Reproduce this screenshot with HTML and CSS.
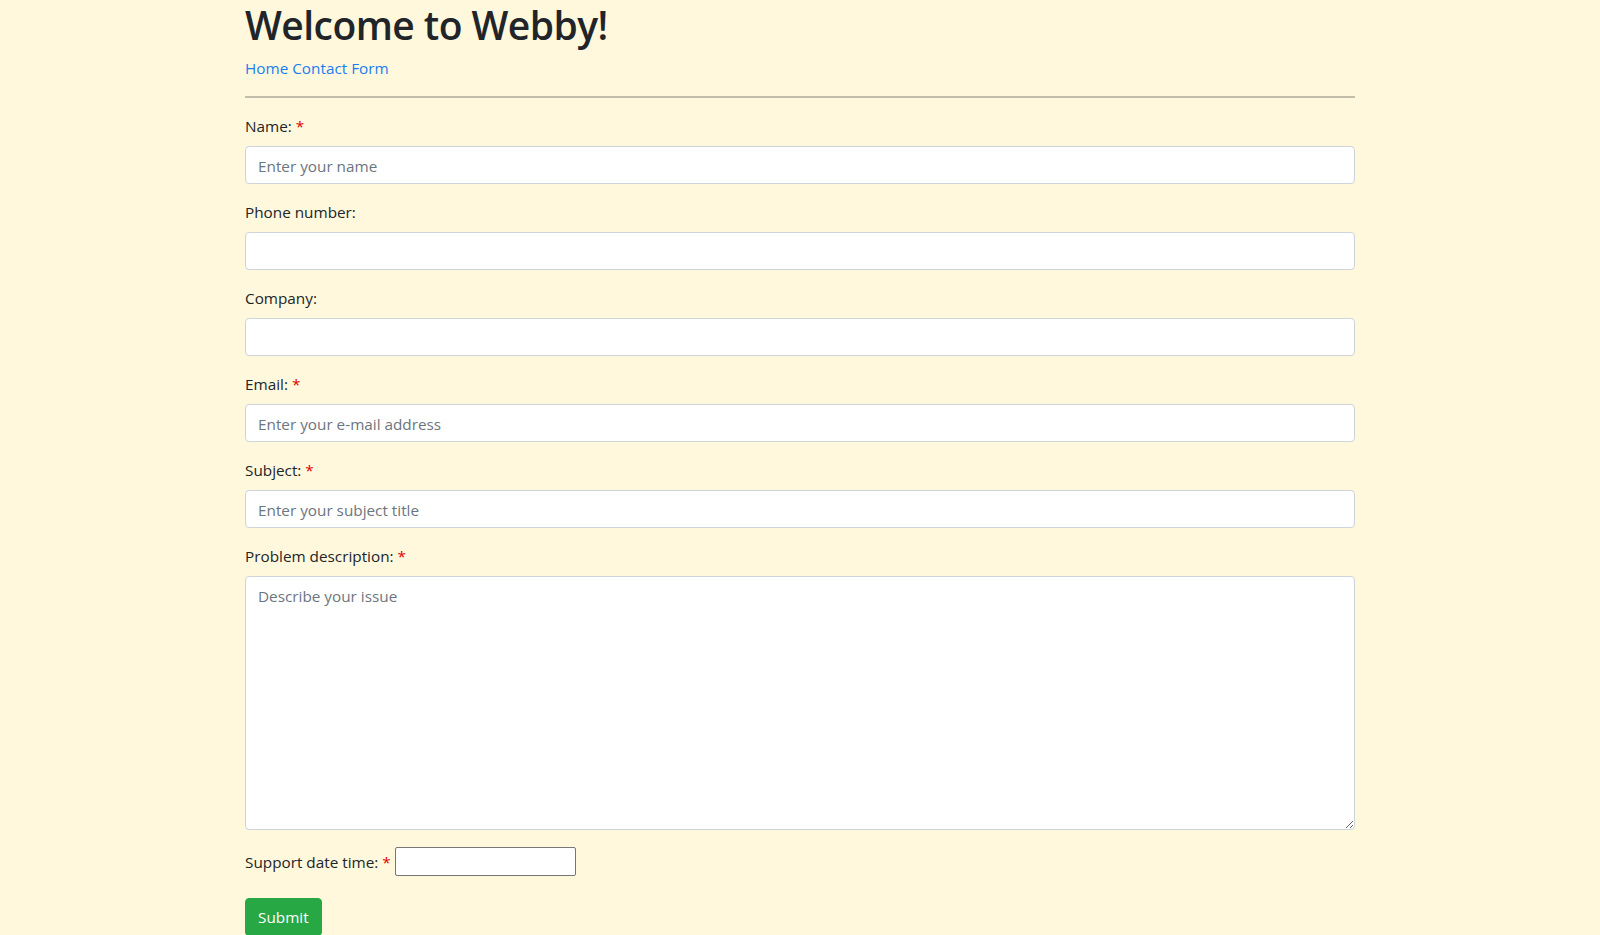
FILE: index.html
```html
<!DOCTYPE html>
<html lang="en">
<head>
<meta charset="utf-8">
<title>Webby</title>
<link rel="stylesheet" href="styles.css">
</head>
<body>
<div class="container">
  <h1 class="title">Welcome to Webby!</h1>
  <nav class="nav"><a href="#">Home</a> <a href="#">Contact Form</a></nav>
  <hr class="divider">
  <form class="form">
    <div class="group">
      <label class="label">Name: <span class="req">*</span></label>
      <input class="control" type="text" placeholder="Enter your name">
    </div>
    <div class="group">
      <label class="label">Phone number:</label>
      <input class="control" type="text">
    </div>
    <div class="group">
      <label class="label">Company:</label>
      <input class="control" type="text">
    </div>
    <div class="group">
      <label class="label">Email: <span class="req">*</span></label>
      <input class="control" type="text" placeholder="Enter your e-mail address">
    </div>
    <div class="group">
      <label class="label">Subject: <span class="req">*</span></label>
      <input class="control" type="text" placeholder="Enter your subject title">
    </div>
    <div class="group">
      <label class="label">Problem description: <span class="req">*</span></label>
      <textarea class="control area" placeholder="Describe your issue"></textarea>
    </div>
    <div class="date-row">
      <label class="date-label">Support date time: <span class="req">*</span></label>
      <input class="date-input" type="text">
    </div>
    <button class="btn-submit" type="button">Submit</button>
  </form>
</div>
</body>
</html>
```
FILE: styles.css
```css
* { box-sizing: border-box; }
html, body { margin: 0; padding: 0; }
body {
  background: #fff8dc;
  color: #212529;
  font-family: "Open Sans", "Noto Sans", sans-serif;
  font-size: 15.3px;
  line-height: 24px;
}
.container {
  max-width: 1140px;
  margin: 0 auto;
  padding: 0 15px;
}
.title {
  margin: 0 0 8px;
  padding-top: 1px;
  height: 48px;
  font-size: 39px;
  font-weight: 600;
  line-height: 48px;
  letter-spacing: -0.55px;
}
.nav { height: 24px; }
.nav a { color: #1a7ef0; text-decoration: none; }
.divider {
  margin: 16px 0;
  border: 0;
  border-top: 2px solid #c3bea9;
  height: 0;
}
.form { margin: 0; }
.group { margin-bottom: 16px; }
.label { display: block; margin-bottom: 8px; line-height: 24px; }
.req { color: #e00000; }
.control {
  display: block;
  width: 100%;
  height: 38px;
  padding: 7px 12px 5px;
  font-family: inherit;
  font-size: 15.3px;
  line-height: 24px;
  color: #495057;
  background: #fff;
  border: 1px solid #ced4da;
  border-radius: 4px;
  outline: none;
}
.control::placeholder { color: #6c757d; opacity: 1; }
.area { height: 254px; resize: vertical; }
.date-row {
  display: flex;
  align-items: center;
  gap: 4px;
  height: 31px;
  margin-bottom: 21px;
}
.date-label { line-height: 24px; }
.date-input {
  width: 181px;
  height: 29px;
  margin-top: -1px;
  border: 1px solid #767676;
  border-radius: 2px;
  background: #fff;
  font-family: inherit;
  font-size: 14px;
  padding: 1px 4px;
}
.btn-submit {
  display: inline-block;
  height: 38px;
  padding: 6px 12px;
  background: #28a745;
  border: 1px solid #28a745;
  border-radius: 4px;
  color: #fff;
  font-family: inherit;
  font-size: 15.3px;
  line-height: 24px;
  cursor: pointer;
}
```
